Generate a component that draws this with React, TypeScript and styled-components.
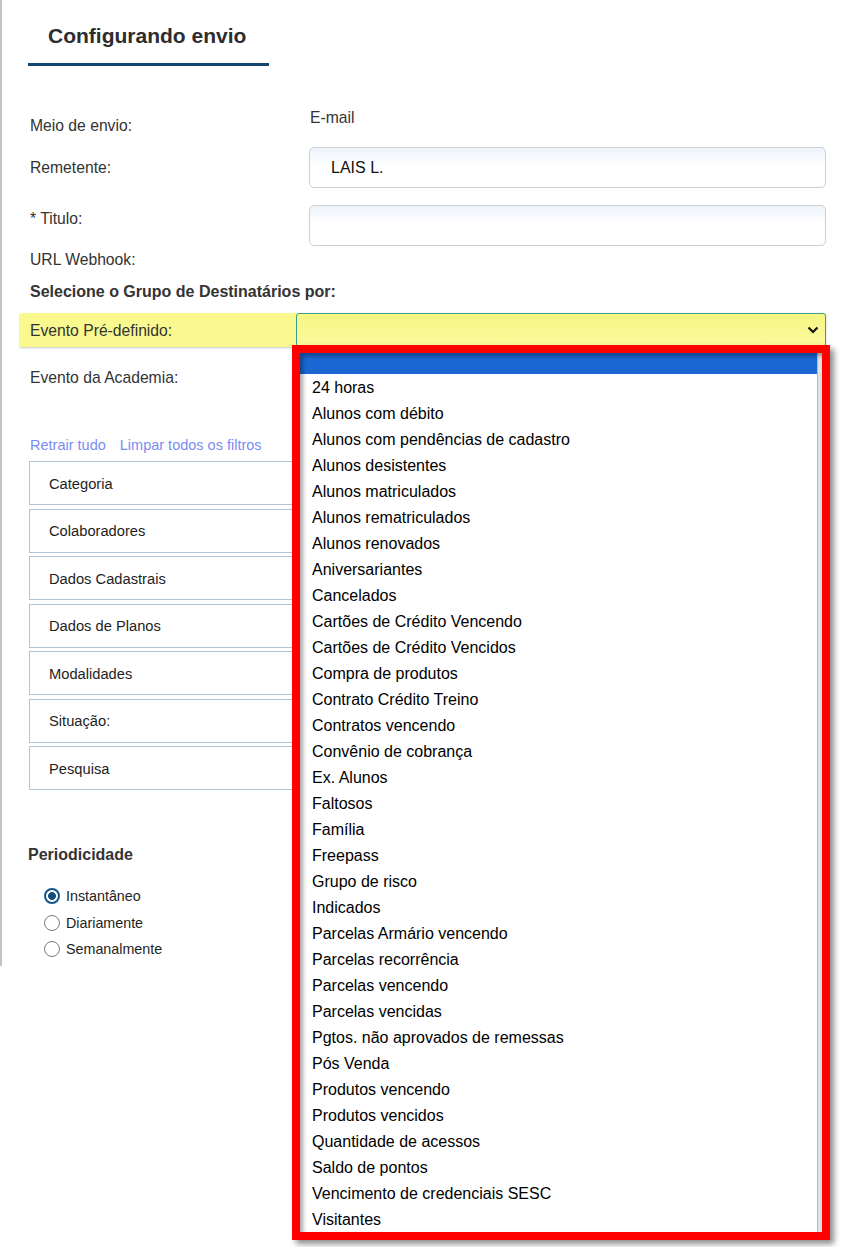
import React from 'react';
import styled, { createGlobalStyle } from 'styled-components';

const GlobalStyle = createGlobalStyle`
  html, body {
    margin: 0;
    padding: 0;
    background: #fff;
  }
  body {
    font-family: "Liberation Sans", Arial, sans-serif;
    color: #333;
  }
  #root {
    min-height: 1247px;
  }
`;

const Page = styled.div`
  width: 798px;
  padding: 0 0 3px 26px;
  border-left: 2px solid #c4c4c4;
`;

const Tab = styled.div`
  display: inline-block;
  width: 201px;
  padding: 24px 20px 15px;
  border-bottom: 3px solid #12486d;
  font-size: 21px;
  line-height: 24px;
  font-weight: bold;
  color: #2d2d2d;
`;

const Row = styled.div<{ $gap: number }>`
  display: grid;
  grid-template-columns: 279px 1fr;
  align-items: start;
  margin: ${(p) => p.$gap}px 0 0 2px;
`;

const Label = styled.div<{ $offset?: number }>`
  padding-top: ${(p) => p.$offset ?? 0}px;
  font-size: 15.7px;
  line-height: 18px;
  color: #333;
`;

const Value = styled.div`
  padding-left: 1px;
  font-size: 15.7px;
  line-height: 18px;
  color: #333;
`;

const TextInput = styled.div`
  height: 39px;
  box-sizing: content-box;
  border: 1px solid #cfcfcf;
  border-radius: 5px;
  background: linear-gradient(#edf3fb 0%, #ffffff 45%);
  padding-left: 21px;
  display: flex;
  align-items: center;
  font-size: 16px;
  color: #111;
`;

const Heading = styled.div<{ $gap: number; $indent?: number }>`
  margin: ${(p) => p.$gap}px 0 0 ${(p) => p.$indent ?? 0}px;
  font-size: 16px;
  line-height: 18px;
  font-weight: bold;
  color: #333;
`;

const HighlightRow = styled.div`
  display: grid;
  grid-template-columns: 276px 1fr;
  align-items: center;
  height: 34px;
  margin: 12px 0 0 -8px;
  background: #f9f98f;
  box-shadow: 0 1px 2px rgba(0, 0, 0, 0.22);
`;

const HighlightLabel = styled(Label)`
  padding: 1px 0 0 10px;
`;

const SelectBox = styled.div`
  position: relative;
  height: 34px;
  box-sizing: border-box;
  border: 1px solid #3b9f8e;
  border-radius: 3px;
  background: linear-gradient(#f7f784, #fafa9e);
  display: flex;
  align-items: center;
  justify-content: flex-end;
  padding-right: 6px;
`;

const Popup = styled.div`
  position: absolute;
  top: 31px;
  left: -5px;
  width: 538px;
  height: 895px;
  box-sizing: border-box;
  border: 8px solid #ff0000;
  background: #fff;
  box-shadow: 4px 4px 6px rgba(0, 0, 0, 0.45);
  display: flex;
  overflow: hidden;
  z-index: 10;

  &::after {
    content: '';
    position: absolute;
    inset: 0;
    pointer-events: none;
    box-shadow: inset 3px 3px 4px rgba(0, 0, 0, 0.35);
  }
`;

const OptionList = styled.div`
  flex: 1;
  display: flex;
  flex-direction: column;
`;

const Option = styled.div<{ $selected?: boolean }>`
  flex: none;
  height: ${(p) => (p.$selected ? 21 : 26)}px;
  line-height: 28px;
  padding-left: 12px;
  font-size: 16px;
  color: #000;
  white-space: nowrap;
  background: ${(p) => (p.$selected ? '#1b67d3' : 'transparent')};
`;

const ScrollTrack = styled.div`
  width: 4px;
  border-left: 1px solid #b9b9b9;
  background: #e2e2e2;
`;

const LinkBar = styled.div`
  display: flex;
  gap: 14px;
  margin: 49px 0 0 2px;
  font-size: 14.5px;
  line-height: 18px;
  color: #7b8df2;
`;

const Accordion = styled.div`
  display: flex;
  flex-direction: column;
  gap: 3.5px;
  margin: 7px 6px 0 1px;
`;

const Panel = styled.div`
  height: 44px;
  box-sizing: border-box;
  border: 1px solid #b3c4d6;
  display: flex;
  align-items: center;
  padding: 1px 0 0 19px;
  font-size: 14.7px;
  color: #1e1e1e;
`;

const RadioGroup = styled.div`
  margin-top: 19px;
  padding-left: 16px;
`;

const RadioRow = styled.div`
  height: 26.5px;
  display: flex;
  align-items: center;
  gap: 6px;
  font-size: 14.3px;
  color: #1e1e1e;
`;

const RadioDot = styled.span<{ $checked?: boolean }>`
  width: 16px;
  height: 16px;
  box-sizing: border-box;
  border-radius: 50%;
  border: ${(p) => (p.$checked ? '2px solid #13558a' : '1.5px solid #7a7a7a')};
  background: ${(p) =>
    p.$checked
      ? 'radial-gradient(circle, #0f4f82 0 3.6px, #ffffff 4.2px)'
      : '#fff'};
`;

const Chevron = () => (
  <svg width="12" height="8" viewBox="0 0 12 8">
    <polyline
      points="1.5,1.5 6,6 10.5,1.5"
      fill="none"
      stroke="#111"
      strokeWidth="2.2"
    />
  </svg>
);

const events = [
  '24 horas',
  'Alunos com débito',
  'Alunos com pendências de cadastro',
  'Alunos desistentes',
  'Alunos matriculados',
  'Alunos rematriculados',
  'Alunos renovados',
  'Aniversariantes',
  'Cancelados',
  'Cartões de Crédito Vencendo',
  'Cartões de Crédito Vencidos',
  'Compra de produtos',
  'Contrato Crédito Treino',
  'Contratos vencendo',
  'Convênio de cobrança',
  'Ex. Alunos',
  'Faltosos',
  'Família',
  'Freepass',
  'Grupo de risco',
  'Indicados',
  'Parcelas Armário vencendo',
  'Parcelas recorrência',
  'Parcelas vencendo',
  'Parcelas vencidas',
  'Pgtos. não aprovados de remessas',
  'Pós Venda',
  'Produtos vencendo',
  'Produtos vencidos',
  'Quantidade de acessos',
  'Saldo de pontos',
  'Vencimento de credenciais SESC',
  'Visitantes'
];

const filters = [
  'Categoria',
  'Colaboradores',
  'Dados Cadastrais',
  'Dados de Planos',
  'Modalidades',
  'Situação:',
  'Pesquisa'
];

const periods = ['Instantâneo', 'Diariamente', 'Semanalmente'];

const App: React.FC = () => {
  return (
    <>
      <GlobalStyle />
      <Page>
        <Tab>Configurando envio</Tab>

        <Row $gap={43}>
          <Label $offset={8}>Meio de envio:</Label>
          <Value>E-mail</Value>
        </Row>
        <Row $gap={12}>
          <Label $offset={12}>Remetente:</Label>
          <TextInput>LAIS L.</TextInput>
        </Row>
        <Row $gap={17}>
          <Label $offset={5}>* Titulo:</Label>
          <TextInput />
        </Row>
        <Row $gap={5}>
          <Label>URL Webhook:</Label>
        </Row>

        <Heading $gap={14} $indent={2}>
          Selecione o Grupo de Destinatários por:
        </Heading>

        <HighlightRow>
          <HighlightLabel>Evento Pré-definido:</HighlightLabel>
          <SelectBox>
            <Chevron />
            <Popup>
              <OptionList>
                <Option $selected />
                {events.map((name) => (
                  <Option key={name}>{name}</Option>
                ))}
              </OptionList>
              <ScrollTrack />
            </Popup>
          </SelectBox>
        </HighlightRow>

        <Row $gap={21}>
          <Label $offset={1}>Evento da Academia:</Label>
        </Row>

        <LinkBar>
          <span>Retrair tudo</span>
          <span>Limpar todos os filtros</span>
        </LinkBar>

        <Accordion>
          {filters.map((name) => (
            <Panel key={name}>{name}</Panel>
          ))}
        </Accordion>

        <Heading $gap={56}>Periodicidade</Heading>
        <RadioGroup>
          {periods.map((name, i) => (
            <RadioRow key={name}>
              <RadioDot $checked={i === 0} />
              {name}
            </RadioRow>
          ))}
        </RadioGroup>
      </Page>
    </>
  );
};

export default App;
